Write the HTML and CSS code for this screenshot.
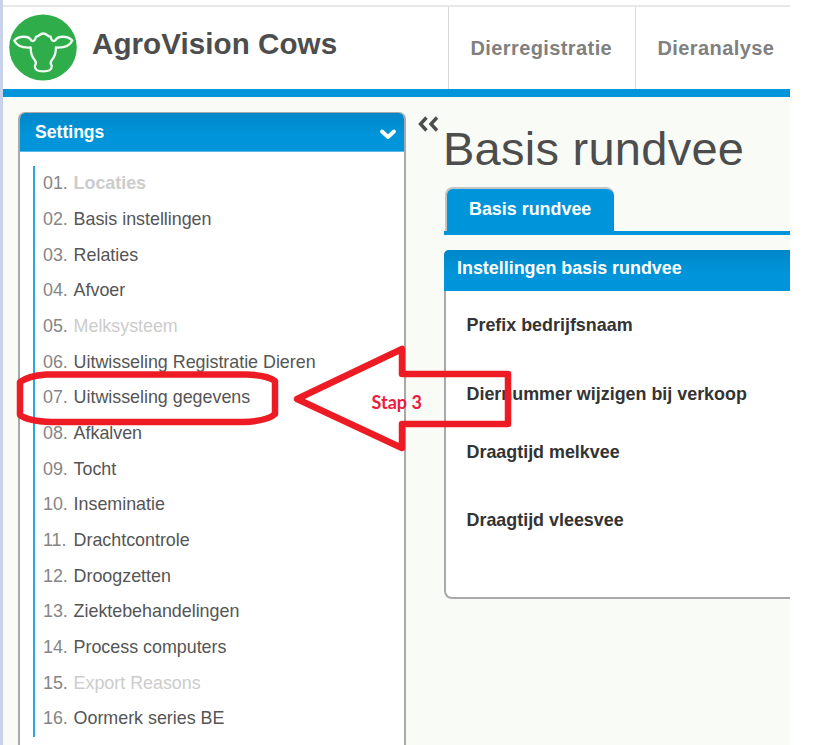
FILE: index.html
```html
<!DOCTYPE html>
<html lang="nl">
<head>
<meta charset="utf-8">
<title>AgroVision Cows</title>
<link rel="stylesheet" href="styles.css">
</head>
<body>
<div class="app">
  <header class="header">
    <div class="brand">
      <svg class="logo" width="68" height="68" viewBox="0 0 68 68">
        <ellipse cx="34" cy="33.500" rx="33.800" ry="33" fill="#2fad4b"/>
        <path d="M22.300 26.500 C20 21.500 10 21.500 5.300 26.500 C8 32.500 14 34 21.700 33.500 C21.500 39 23 43 26 46.500 C28 49 27 50 25.800 52 C26 56 28 57.300 34.300 57.300 S42.600 56 42.800 52 C41.600 50 40.600 49 42.600 46.500 C45.600 43 47.100 39 46.900 33.500 C54.600 34 60.600 32.500 63.300 26.500 C58.600 21.500 48.600 21.500 46.300 26.500 C43.500 28 42 25.500 41.600 22.700 C38.500 23 38.500 19.500 34.300 19.500 S30 23 27 22.700 C26.600 25.500 25 28 22.300 26.500 Z" fill="none" stroke="#f1faf2" stroke-width="2.300" stroke-linejoin="round"/>
      </svg>
      <h1 class="brand-name">AgroVision Cows</h1>
    </div>
    <nav class="nav">
      <a class="nav-item first">Dierregistratie</a>
      <a class="nav-item">Dieranalyse</a>
    </nav>
  </header>
  <div class="content">
    <aside class="sidebar">
      <div class="bar sidebar-bar">
        <span>Settings</span>
        <svg width="18" height="13" viewBox="0 0 18 13"><path d="M3 3.5 L9 9 L15 3.5" fill="none" stroke="#fff" stroke-width="3.8" stroke-linecap="round" stroke-linejoin="round"/></svg>
      </div>
      <ol class="menu">
        <li class="off strong"><i>01.</i><span>Locaties</span></li>
        <li><i>02.</i><span>Basis instellingen</span></li>
        <li><i>03.</i><span>Relaties</span></li>
        <li><i>04.</i><span>Afvoer</span></li>
        <li class="off"><i>05.</i><span>Melksysteem</span></li>
        <li><i>06.</i><span>Uitwisseling Registratie Dieren</span></li>
        <li><i>07.</i><span>Uitwisseling gegevens</span></li>
        <li><i>08.</i><span>Afkalven</span></li>
        <li><i>09.</i><span>Tocht</span></li>
        <li><i>10.</i><span>Inseminatie</span></li>
        <li><i>11.</i><span>Drachtcontrole</span></li>
        <li><i>12.</i><span>Droogzetten</span></li>
        <li><i>13.</i><span>Ziektebehandelingen</span></li>
        <li><i>14.</i><span>Process computers</span></li>
        <li class="off"><i>15.</i><span>Export Reasons</span></li>
        <li><i>16.</i><span>Oormerk series BE</span></li>
      </ol>
    </aside>
    <svg class="collapse" width="22" height="18" viewBox="0 0 22 18"><path d="M9.500 2.500 L3.500 9 L9.500 15.500 M20 2.500 L14 9 L20 15.500" fill="none" stroke="#4d4d4d" stroke-width="3.400"/></svg>
    <main class="main">
      <h2 class="title">Basis rundvee</h2>
      <div class="tabs"><div class="tab">Basis rundvee</div></div>
      <section class="panel">
        <div class="bar panel-bar">Instellingen basis rundvee</div>
        <div class="fields">
          <div class="field f1">Prefix bedrijfsnaam</div>
          <div class="field f2">Diernummer wijzigen bij verkoop</div>
          <div class="field f3">Draagtijd melkvee</div>
          <div class="field">Draagtijd vleesvee</div>
        </div>
      </section>
    </main>
  </div>
</div>
<svg class="marks" width="814" height="745" viewBox="0 0 814 745">
  <g fill="none" stroke="#ed1c24" stroke-width="6.500" stroke-linejoin="round">
    <path d="M46 374.500 H246 Q267 375 275 381 V414 Q268 421 243 422 H52 Q27 421 20 415 V382 Q28 376 46 374.500 Z"/>
    <path d="M297 399 L402 349 V374 H508 V424 H402 V448 Z"/>
  </g>
</svg>
<div class="step">Stap 3</div>
</body>
</html>
```
FILE: styles.css
```css
* { box-sizing: border-box; }
body {
  margin: 0;
  height: 745px;
  overflow: hidden;
  position: relative;
  background: #fff;
  font-family: "Liberation Sans", Arial, sans-serif;
  font-size: 17.9px;
  color: #555;
}
.app {
  width: 789.5px;
  height: 745px;
  overflow: hidden;
  padding-top: 5px;
  border-left: 3px solid #c8d3e9;
}
.header {
  display: flex;
  height: 92px;
  border-top: 2px solid #e8e8e8;
  border-bottom: 8px solid #0095da;
}
.brand { display: flex; flex: none; width: 444.5px; padding: 7px 0 0 6px; }
.logo { flex: none; }
.brand-name { margin: 13px 0 0 15px; font-size: 29.6px; line-height: 34px; letter-spacing: .05px; color: #4d4d4d; white-space: nowrap; }
.nav { display: flex; flex: none; }
.nav-item {
  border-left: 1.5px solid #d8d8d8;
  padding: 0 22px;
  width: 187px;
  flex: none;
  font-weight: bold;
  font-size: 20px;
  letter-spacing: .4px;
  line-height: 83px;
  color: #808080;
}
.content { display: flex; align-items: flex-start; height: 648px; background: #f9fbf7; }
.sidebar {
  width: 388px;
  height: 660px;
  flex: none;
  margin: 15px 0 0 15px;
  border: 2px solid #a9a9a9;
  border-top-width: 1px;
  border-radius: 7px 7px 0 0;
  background: #fff;
  overflow: hidden;
}
.bar {
  background: linear-gradient(#0087c9, #0095da 60%);
  color: #fff;
  font-weight: bold;
}
.sidebar-bar {
  display: flex;
  justify-content: space-between;
  align-items: center;
  height: 39px;
  padding: 2px 7px 1px 15px;
  font-size: 17.6px;
  border-bottom: 1px solid #5bbbe8;
}
.sidebar-bar svg { margin-top: 4px; }
.menu {
  list-style: none;
  margin: 14px 0 0 13px;
  padding: .4px 0 0 8px;
  border-left: 2px solid #2aa6e0;
  height: 571px;
}
.menu li { display: flex; height: 35.67px; line-height: 35px; white-space: nowrap; letter-spacing: -.02px; }
.menu i { width: 30.6px; font-style: normal; color: #858585; }
.menu .off span { color: #ccc; }
.menu .strong span { font-weight: bold; }
.collapse { flex: none; margin: 18px 0 0 11px; }
.main { flex: none; width: 346px; margin: 0 0 0 5px; }
.title { margin: 25px 0 0 -1px; font-weight: normal; font-size: 47px; letter-spacing: .26px; line-height: 54px; color: #4d4d4d; white-space: nowrap; }
.tabs { margin-top: 11px; height: 48px; border-bottom: 4px solid #0095da; padding-left: 1px; }
.tab {
  width: 169px;
  height: 44px;
  padding-left: 22px;
  border: 2px solid #c4c4c4;
  border-right: 0;
  border-bottom: 0;
  border-radius: 8px 8px 0 0;
  background: #0095da;
  color: #fff;
  font-weight: bold;
  line-height: 40px;
}
.panel {
  margin-top: 15px;
  height: 349px;
  border: 2px solid #a9a9a9;
  border-top: 0;
  border-right: 0;
  border-radius: 5px 0 0 8px;
  background: #fff;
}
.panel-bar { height: 41px; margin-left: -2px; padding-left: 13px; line-height: 37px; border-radius: 5px 0 0 0; }
.fields { padding: 24px 0 0 20.5px; color: #333; font-weight: bold; }
.field { line-height: 20px; white-space: nowrap; }
.f1 { margin-bottom: 49px; }
.f2 { margin-bottom: 38px; }
.f3 { margin-bottom: 48px; }
.marks { position: absolute; left: 0; top: 0; }
.step { position: absolute; left: 371.5px; top: 391px; font: bold 18px/22px Lato, sans-serif; color: #ed1c3c; white-space: nowrap; }
```
